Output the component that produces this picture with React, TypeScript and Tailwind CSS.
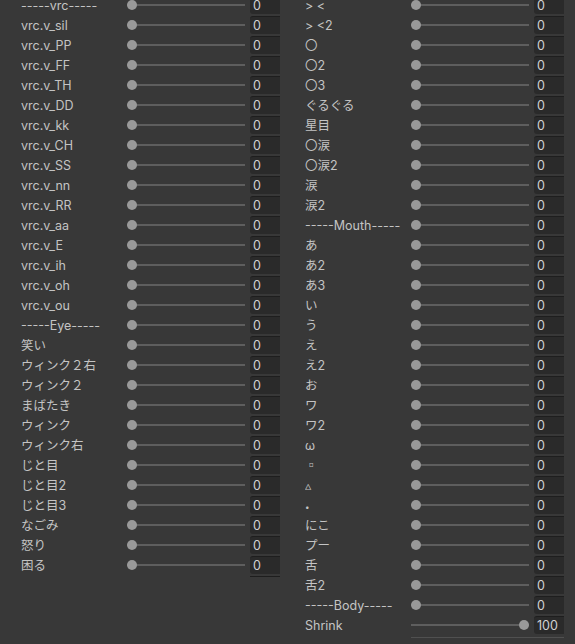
const left: [string, number][] = [
  ["-----vrc-----", 0],
  ["vrc.v_sil", 0],
  ["vrc.v_PP", 0],
  ["vrc.v_FF", 0],
  ["vrc.v_TH", 0],
  ["vrc.v_DD", 0],
  ["vrc.v_kk", 0],
  ["vrc.v_CH", 0],
  ["vrc.v_SS", 0],
  ["vrc.v_nn", 0],
  ["vrc.v_RR", 0],
  ["vrc.v_aa", 0],
  ["vrc.v_E", 0],
  ["vrc.v_ih", 0],
  ["vrc.v_oh", 0],
  ["vrc.v_ou", 0],
  ["-----Eye-----", 0],
  ["笑い", 0],
  ["ウィンク２右", 0],
  ["ウィンク２", 0],
  ["まばたき", 0],
  ["ウィンク", 0],
  ["ウィンク右", 0],
  ["じと目", 0],
  ["じと目2", 0],
  ["じと目3", 0],
  ["なごみ", 0],
  ["怒り", 0],
  ["困る", 0],
];

const right: [string, number][] = [
  ["> <", 0],
  ["> <2", 0],
  ["〇", 0],
  ["〇2", 0],
  ["〇3", 0],
  ["ぐるぐる", 0],
  ["星目", 0],
  ["〇涙", 0],
  ["〇涙2", 0],
  ["涙", 0],
  ["涙2", 0],
  ["-----Mouth-----", 0],
  ["あ", 0],
  ["あ2", 0],
  ["あ3", 0],
  ["い", 0],
  ["う", 0],
  ["え", 0],
  ["え2", 0],
  ["お", 0],
  ["ワ", 0],
  ["ワ2", 0],
  ["ω", 0],
  ["▫", 0],
  ["▵", 0],
  ["•", 0],
  ["にこ", 0],
  ["プー", 0],
  ["舌", 0],
  ["舌2", 0],
  ["-----Body-----", 0],
  ["Shrink", 100],
];

function Row({ label, value }: { label: string; value: number }) {
  return (
    <div className="flex h-5 items-center">
      <div className="relative top-px w-[106px] shrink-0 truncate whitespace-pre">
        {label === "•" ? <span className="text-[8px]">{label}</span> : label}
      </div>
      <div className="relative h-5 w-[118px] shrink-0">
        <div className="absolute left-0 right-0 top-[9px] h-[2px] bg-[#5e5e5e]" />
        <div
          className="absolute top-[5px] h-[10px] w-[10px] rounded-full bg-[#999999]"
          style={{ left: `${(value / 100) * 108}px` }}
        />
      </div>
      <div className="ml-[5px] flex h-[18px] flex-1 items-center rounded-l-[3px] border-t border-[#1e1e1e] bg-[#2a2a2a] pl-[3px] text-[#d2d2d2]">
        <span className="relative top-px">{value}</span>
      </div>
    </div>
  );
}

export default function App() {
  return (
    <div
      className="h-[644px] w-[575px] overflow-hidden bg-[#383838] text-[12.5px] text-[#c4c4c4]"
      style={{ fontFamily: 'Inter, "Noto Sans CJK JP", "DejaVu Sans", sans-serif' }}
    >
      <div className="-mt-[5px] flex gap-[5px]">
        <div className="w-[280px] shrink-0 overflow-hidden pl-[21px]">
          {left.map(([l, v], i) => (
            <Row key={i} label={l} value={v} />
          ))}
          <div className="ml-[229px] mt-[1px] h-px bg-[#1e1e1e]" />
        </div>
        <div className="w-[279px] shrink-0 overflow-hidden pl-[20px]">
          {right.map(([l, v], i) => (
            <Row key={i} label={l} value={v} />
          ))}
          <div className="ml-[106px] mt-[2px] h-px bg-[#505050]" />
        </div>
      </div>
    </div>
  );
}
